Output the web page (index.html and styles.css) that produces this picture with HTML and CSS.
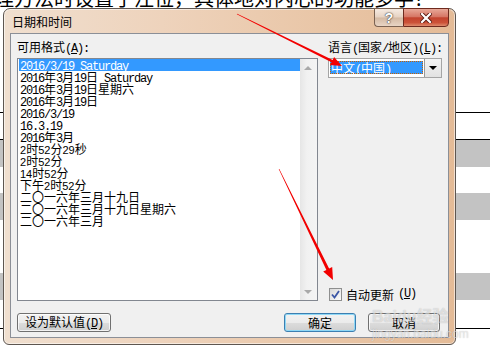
FILE: index.html
```html
<!DOCTYPE html>
<html lang="zh-CN">
<head>
  <meta charset="UTF-8" />
  <title>日期和时间</title>
  <link rel="stylesheet" href="styles.css">
</head>
<body>
  <div class="desk">

    <!-- document behind the dialog -->
    <div class="doc">
      <p class="doc-text"><span>理方法时设置于注位，具体地对内心的功能多学？</span></p>
      <hr class="rule r1">
      <hr class="rule r2">
      <div class="band"></div>
      <div class="band b2"></div>
      <div class="band b3"></div>
      <hr class="rule r3">
    </div>

    <!-- dialog window -->
    <div class="dialog">
      <div class="titlebar">
        <span class="title">日期和时间</span>
        <div class="caps">
          <span class="cap help">?</span>
          <span class="cap close">
            <svg width="12" height="10" viewBox="0 0 12 10">
              <path d="M2 1 L10 9 M10 1 L2 9" stroke="#5a1a10" stroke-width="4" stroke-linecap="square"/>
              <path d="M2 1 L10 9 M10 1 L2 9" stroke="#fff" stroke-width="2.2" stroke-linecap="square"/>
            </svg>
          </span>
        </div>
      </div>

      <div class="client">
        <div class="main">
          <div class="col-left">
            <label class="lbl">可用格式<span class="a">(<u>A</u>):</span></label>
            <div class="listbox">
              <ul class="items">
                <li class="sel"><span class="a">2016/3/19 Saturday</span></li>
                <li><span class="a">2016</span>年<span class="a">3</span>月<span class="a">19</span>日<span class="a"> Saturday</span></li>
                <li><span class="a">2016</span>年<span class="a">3</span>月<span class="a">19</span>日星期六</li>
                <li><span class="a">2016</span>年<span class="a">3</span>月<span class="a">19</span>日</li>
                <li><span class="a">2016/3/19</span></li>
                <li><span class="a">16.3.19</span></li>
                <li><span class="a">2016</span>年<span class="a">3</span>月</li>
                <li><span class="n">2</span>时<span class="n">52</span>分<span class="n">29</span>秒</li>
                <li><span class="n">2</span>时<span class="n">52</span>分</li>
                <li><span class="n">14</span>时<span class="n">52</span>分</li>
                <li>下午<span class="n">2</span>时<span class="n">52</span>分</li>
                <li>二〇一六年三月十九日</li>
                <li>二〇一六年三月十九日星期六</li>
                <li>二〇一六年三月</li>
              </ul>
              <div class="vscroll"><i class="up"></i><i class="down"></i></div>
            </div>
          </div>

          <div class="col-right">
            <label class="lbl">语言<span class="a">(</span>国家<span class="a">/</span>地区<span class="a">)(<u>L</u>):</span></label>
            <div class="combo">
              <span class="combo-val">中文<span class="a">(</span>中国<span class="a">)</span></span>
              <span class="combo-btn"><i></i></span>
            </div>
            <label class="check">
              <span class="box">
                <svg width="9" height="9" viewBox="0 0 9 9">
                  <path d="M1 4.5 L3.5 7.5 L8 1" fill="none" stroke="#3a55a5" stroke-width="1.8"/>
                </svg>
              </span>
              自动更新<span class="a">(<u>U</u>)</span>
            </label>
          </div>
        </div>

        <div class="buttons">
          <button class="wide">设为默认值<span class="a">(<u>D</u>)</span></button>
          <div class="btn-group">
            <button class="default">确定</button>
            <button>取消</button>
          </div>
        </div>
      </div>
    </div>

    <!-- site watermark -->
    <div class="watermark">
      <span class="wm-big">Baidu经验</span>
      <span class="wm-small">jingyan.baidu.com</span>
    </div>

    <!-- red annotation arrows -->
    <svg class="arrows" width="490" height="347" viewBox="0 0 490 347">
      <polygon points="237.2,13.8 332.7,59.9 334.1,57.1 342,66 330.1,65.1 331.5,62.3 236.8,14.2" fill="#f20000"/>
      <polygon points="279.3,168.9 329.1,268.5 332.2,267 333,280 323.2,271.4 326.4,269.9 278.7,169.1" fill="#f20000"/>
    </svg>
  </div>
</body>
</html>
```

FILE: styles.css
```css
*{box-sizing:border-box;}
body{margin:0;width:490px;height:347px;overflow:hidden;background:#fff;color:#000;
  font-family:"Noto Sans CJK SC","Noto Sans",sans-serif;font-size:12px;}
.desk{position:relative;width:490px;height:347px;}

/* ascii runs in the half-width dialog font */
.a{font-family:"Liberation Mono",monospace;letter-spacing:-1.2px;}
.n{font-family:"Liberation Sans",sans-serif;font-size:11px;}
u{text-decoration:underline;}

/* —— page behind —— */
.doc-text{margin:0 0 0 -6px;height:9px;overflow:hidden;font-size:20px;line-height:20px;white-space:nowrap;}
.doc-text span{display:block;margin-top:-12px;}
.rule{border:0;margin:0;height:1px;background:#000;}
.r1{margin-top:103px;}
.r2{margin-top:26px;}
.band{height:27px;background:#c3c3c3;}
.b2{margin-top:26px;}
.b3{margin-top:53px;}
.r3{margin-top:28px;}

/* —— dialog frame —— */
.dialog{position:absolute;left:3px;top:8px;width:453px;height:337px;display:flex;flex-direction:column;
  border:1px solid #5e5650;border-radius:7px 7px 6px 6px;padding:0 6px 6px;
  background:linear-gradient(to right,#f0dfcf 0%,#eed3bc 35%,#e9c6a7 70%,#e4bb97 100%);
  box-shadow:inset 0 0 0 1px rgba(255,255,255,.55);}
.titlebar{height:26px;display:flex;align-items:flex-start;}
.title{padding:5px 0 0 2px;line-height:16px;}
.caps{margin-left:auto;margin-top:-1px;display:flex;height:19px;}
.cap{height:19px;display:flex;align-items:center;justify-content:center;}
.help{width:29px;border:1px solid #7a6252;border-right:0;border-radius:0 0 0 4px;
  background:linear-gradient(#f6ebe2 0%,#e6d2c2 48%,#d4b9a3 52%,#e8d5c5 100%);
  color:#fff;font:bold 14px "Liberation Sans",sans-serif;
  text-shadow:0 0 1px #222,0 0 2px #444;}
.close{width:46px;border:1px solid #6e2a1e;border-radius:0 0 4px 0;
  background:linear-gradient(#e8a898 0%,#d67765 45%,#c2432e 52%,#cc5238 80%,#de8a6c 100%);}

/* —— client area —— */
.client{flex:1;display:flex;flex-direction:column;background:#f0f0f0;
  border:1px solid #8b8f97;padding:6px 6px 5px;}
.main{display:flex;gap:10px;}
.lbl{display:block;line-height:14px;margin-bottom:2px;white-space:nowrap;}
.col-left{width:301px;}
.col-right{flex:1;display:flex;flex-direction:column;}

.listbox{height:243px;display:flex;border:1px solid #828790;background:#fff;padding-left:1px;}
.items{flex:1;list-style:none;margin:0;padding:0;}
.items li{height:12px;line-height:12px;padding-left:1px;white-space:nowrap;}
.items li.sel{background:#3399ff;color:#fff;}
.vscroll{width:17px;display:flex;flex-direction:column;justify-content:space-between;
  background:linear-gradient(to right,#e6e6e6,#f1f1f1 40%,#f4f4f4);}
.vscroll i{height:17px;display:flex;align-items:center;justify-content:center;}
.vscroll i::before{content:"";border-left:4px solid transparent;border-right:4px solid transparent;}
.up::before{border-bottom:4px solid #a9a9a9;}
.down::before{border-top:4px solid #a9a9a9;}

.combo{height:20px;display:flex;border:1px solid #a5a5a5;background:#fff;padding:0 0 0 1px;}
.combo-val{flex:1;margin:2px 1px 3px 0;padding-left:1px;line-height:13px;color:#fff;background:#3399ff;
  outline:1px dotted #c86000;outline-offset:-1px;white-space:nowrap;}
.combo-btn{width:17px;display:flex;align-items:center;justify-content:center;
  border-left:1px solid #9a9a9a;background:linear-gradient(#f4f4f4,#e2e2e2);}
.combo-btn i::before{content:"";display:block;border-left:4px solid transparent;border-right:4px solid transparent;border-top:4px solid #000;}

.check{margin-top:auto;height:14px;display:flex;align-items:center;gap:4px;padding-left:1px;white-space:nowrap;}
.box{width:13px;height:13px;display:flex;align-items:center;justify-content:center;
  border:1px solid #8e8f8f;background:linear-gradient(135deg,#d8d8d8,#fbfbfb);}

/* —— buttons —— */
.buttons{margin-top:12px;display:flex;justify-content:space-between;}
.btn-group{display:flex;gap:12px;margin-right:2px;}
button{font:inherit;color:#000;width:72px;height:19px;padding:0;line-height:16px;
  border:1px solid #707070;border-radius:3px;
  background:linear-gradient(#f2f2f2 0%,#ebebeb 50%,#dddddd 50%,#cfcfcf 100%);
  box-shadow:inset 0 0 0 1px rgba(255,255,255,.75);}
button.wide{width:94px;}
button.default{border-color:#3c7fb1;box-shadow:inset 0 0 0 1px #8fd8f6;}

/* —— overlays —— */
.watermark{position:absolute;left:372px;top:303px;display:flex;flex-direction:column;
  color:rgba(255,255,255,.55);text-shadow:0 0 1px rgba(0,0,0,.25);line-height:1;}
.wm-big{font:bold 16px "Liberation Sans","Noto Sans CJK SC",sans-serif;}
.wm-small{font:12px "Liberation Sans",sans-serif;margin-top:0;}
.arrows{position:absolute;left:0;top:0;pointer-events:none;}
```
